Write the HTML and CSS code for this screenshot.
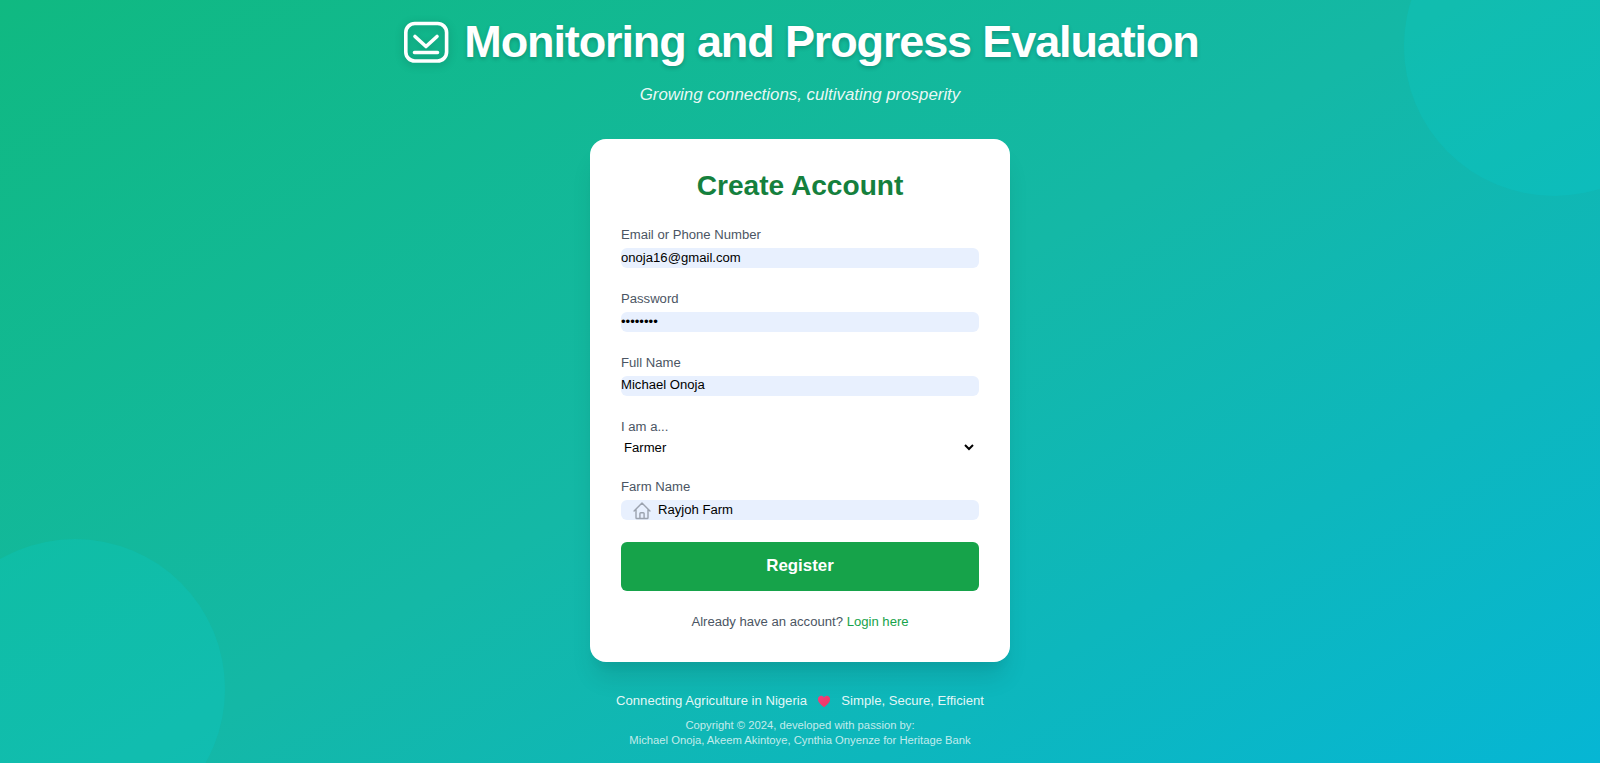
FILE: index.html
```html
<!DOCTYPE html>
<html lang="en">
<head>
<meta charset="utf-8">
<title>Create Account</title>
<link rel="stylesheet" href="styles.css">
</head>
<body>
<div class="backdrop">
  <div class="circle circle-top"></div>
  <div class="circle circle-bottom"></div>
</div>
<main class="page">
  <header class="hero">
    <h1 class="hero-title">
      <svg class="hero-icon" viewBox="0 0 48 48" fill="none" stroke="currentColor" stroke-width="3.600" stroke-linecap="round" stroke-linejoin="round"><rect x="4.800" y="5.500" width="40.800" height="37.500" rx="9"/><path d="M14 18.500L25 28.500 36 18.500M13.500 34.500H36.500"/></svg>
      <span>Monitoring and Progress Evaluation</span>
    </h1>
    <p class="tagline">Growing connections, cultivating prosperity</p>
  </header>
  <section class="card">
    <h2 class="card-title">Create Account</h2>
    <form class="form">
      <div class="field"><label class="label">Email or Phone Number</label><input class="input input-raised" type="text" value="onoja16@gmail.com"></div>
      <div class="field"><label class="label">Password</label><input class="input" type="password" value="password"></div>
      <div class="field"><label class="label">Full Name</label><input class="input input-raised" type="text" value="Michael Onoja"></div>
      <div class="field"><label class="label">I am a...</label><select class="select"><option>Farmer</option></select></div>
      <div class="field"><label class="label">Farm Name</label>
        <div class="input-wrap">
          <svg class="home-icon" viewBox="0 0 24 24" fill="none" stroke="currentColor" stroke-width="1.700" stroke-linecap="round" stroke-linejoin="round"><path d="M2.500 12L12 2.500 21.500 12M4.800 10v10a1 1 0 001 1h12.400a1 1 0 001-1V10M9.500 21v-6a1 1 0 011-1h3a1 1 0 011 1v6"/></svg>
          <input class="input input-icon" type="text" value="Rayjoh Farm">
        </div>
      </div>
      <button class="submit" type="button">Register</button>
    </form>
    <p class="switch">Already have an account? <a class="link" href="#">Login here</a></p>
  </section>
  <footer class="footer">
    <p class="footer-main"><span>Connecting Agriculture in Nigeria</span>
      <svg class="heart" viewBox="0 0 16 16"><defs><linearGradient id="heart-fill" x1="0" y1="0" x2="1" y2="1"><stop offset="0" stop-color="#f43f7e"/><stop offset="1" stop-color="#f0365f"/></linearGradient></defs><path fill="url(#heart-fill)" d="M8 15C3 11.200.5 8.500.5 5.300.5 2.800 2.400 1 4.600 1 6 1 7.200 1.800 8 3.100 8.800 1.800 10 1 11.400 1c2.200 0 4.100 1.800 4.100 4.300 0 3.200-2.500 5.900-7.500 9.700z"/></svg>
      <span>Simple, Secure, Efficient</span></p>
    <p class="copyright">Copyright © 2024, developed with passion by:<br>Michael Onoja, Akeem Akintoye, Cynthia Onyenze for Heritage Bank</p>
  </footer>
</main>
</body>
</html>
```
FILE: styles.css
```css
* { box-sizing: border-box; }
html, body { height: 100%; margin: 0; overflow: hidden; }
body {
  position: relative;
  font-family: "Liberation Sans", Arial, sans-serif;
  background: linear-gradient(150deg, #10b981 0%, #14b8a6 50%, #06b6d4 100%);
  color: #fff;
}
.backdrop { position: absolute; inset: 0; overflow: hidden; }
.circle { position: absolute; width: 300px; height: 300px; border-radius: 50%; background: rgba(6,210,215,.2); }
.circle-top { left: 1404px; top: -104px; }
.circle-bottom { left: -75px; top: 539px; }
.page { position: relative; display: flex; flex-direction: column; align-items: center; }
.hero { display: flex; flex-direction: column; align-items: center; padding-top: 15px; }
.hero-title { display: flex; align-items: center; gap: 15px; margin: 0; font-size: 45px; line-height: 54px; font-weight: 700; letter-spacing: -1.125px; text-shadow: 0 2px 4px rgba(0,0,0,.2); }
.hero-icon { flex: none; width: 48px; height: 48px; filter: drop-shadow(0 2px 4px rgba(0,0,0,.2)); }
.tagline { margin: 14px 0 0; font-size: 16.875px; line-height: 24px; font-style: italic; color: rgba(255,255,255,.92); }
.card { width: 420px; margin-top: 32px; padding: 30px 31px 31px; background: #fff; border-radius: 16px; box-shadow: 0 20px 25px -5px rgba(0,0,0,.1), 0 10px 10px -5px rgba(0,0,0,.04); }
.card-title { margin: 0 0 23.5px; text-align: center; color: #15803d; font-size: 28.125px; line-height: 33.75px; font-weight: 700; }
.form { display: flex; flex-direction: column; gap: 22px; }
.field { display: flex; flex-direction: column; }
.label { display: block; margin-bottom: 3px; font-size: 13.125px; line-height: 18.75px; color: #4b5563; }
.input { display: block; width: 100%; height: 20px; padding: 0; border: 0; outline: 0; border-radius: 6px; background: #e8f0fe; color: #000; font: 13.125px "Liberation Sans", Arial, sans-serif; }
.input-raised { padding-bottom: 2px; }
.select { display: block; width: calc(100% - 1px); height: 16.5px; margin-left: -1px; padding: 0; border: 0; outline: 0; background: transparent; color: #000; font: 13.125px "Liberation Sans", Arial, sans-serif; }
.input-wrap { position: relative; }
.input-icon { padding-left: 37px; }
.home-icon { position: absolute; left: 11px; top: 1px; width: 20px; height: 20px; color: #9ca3af; }
.submit { height: 49px; border: 0; border-radius: 6px; background: #16a34a; color: #fff; font: 700 16.875px "Liberation Sans", Arial, sans-serif; }
.switch { margin: 22px 0 0; text-align: center; font-size: 13.125px; line-height: 18.75px; color: #4b5563; }
.link { color: #16a34a; text-decoration: none; }
.footer { margin-top: 29.6px; text-align: center; }
.footer-main { display: flex; align-items: center; justify-content: center; gap: 8px; margin: 0; font-size: 13.125px; line-height: 18.75px; color: rgba(255,255,255,.9); }
.heart { width: 14px; height: 13px; margin: 0 2.2px; }
.copyright { margin: 7.6px 0 0; font-size: 11.25px; line-height: 15px; color: rgba(255,255,255,.75); }
```
